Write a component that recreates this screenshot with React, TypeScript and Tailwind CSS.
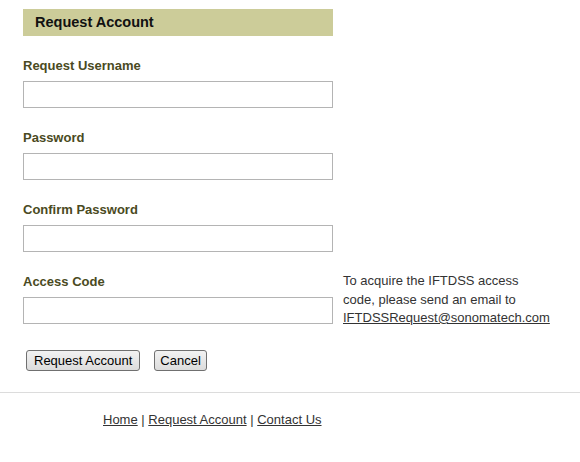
import React from 'react';

const fields = ['Request Username', 'Password', 'Confirm Password'];

const Field: React.FC<{ label: string; type?: string }> = ({ label, type = 'text' }) => (
  <div className="w-[310px] shrink-0">
    <label className="block pt-[1px] text-[13px] leading-[15px] font-bold text-[#4a4a22] mb-[8px]">{label}</label>
    <input type={type} className="block w-[310px] h-[27px] border border-[#b4b4b4] bg-white outline-none" />
  </div>
);

const btn =
  'h-[21px] text-[13px] leading-[19px] text-black rounded-[3px] border border-[#707070] bg-gradient-to-b from-[#f2f2f2] to-[#dcdcdc]';

export default function App() {
  return (
    <div className="w-[580px] h-[462px] bg-white font-['Liberation_Sans',Arial,sans-serif]">
      <div className="pl-[23px] pt-[9px]">
        <div className="w-[310px] h-[27px] bg-[#cccc99] pl-[12px] flex items-center">
          <h2 className="text-[14.5px] font-bold text-[#111]">Request Account</h2>
        </div>

        <div className="mt-[21px] flex flex-col gap-[21px]">
          {fields.map((f) => (
            <Field key={f} label={f} type={f === 'Request Username' ? 'text' : 'password'} />
          ))}
          <div className="flex items-start gap-[10px] h-[51px]">
            <Field label="Access Code" />
            <p className="text-[13px] leading-[18.5px] text-[#333] -mt-[1px] w-[207px]">
              To acquire the IFTDSS access code, please send an email to{' '}
              <a href="#" className="underline text-[#333]">IFTDSSRequest@sonomatech.com</a>
            </p>
          </div>
        </div>

        <div className="mt-[26px] pl-[3px] flex gap-[14px]">
          <button className={btn + ' px-[7px]'}>Request Account</button>
          <button className={btn + ' px-[5px]'}>Cancel</button>
        </div>
      </div>

      <div className="mt-[21px] border-t border-[#dcdcdc]" />

      <div className="pl-[103px] pt-[19px] text-[13px] leading-[15px] text-[#333]">
        <a href="#" className="underline">Home</a> | <a href="#" className="underline">Request Account</a> |{' '}
        <a href="#" className="underline">Contact Us</a>
      </div>
    </div>
  );
}
